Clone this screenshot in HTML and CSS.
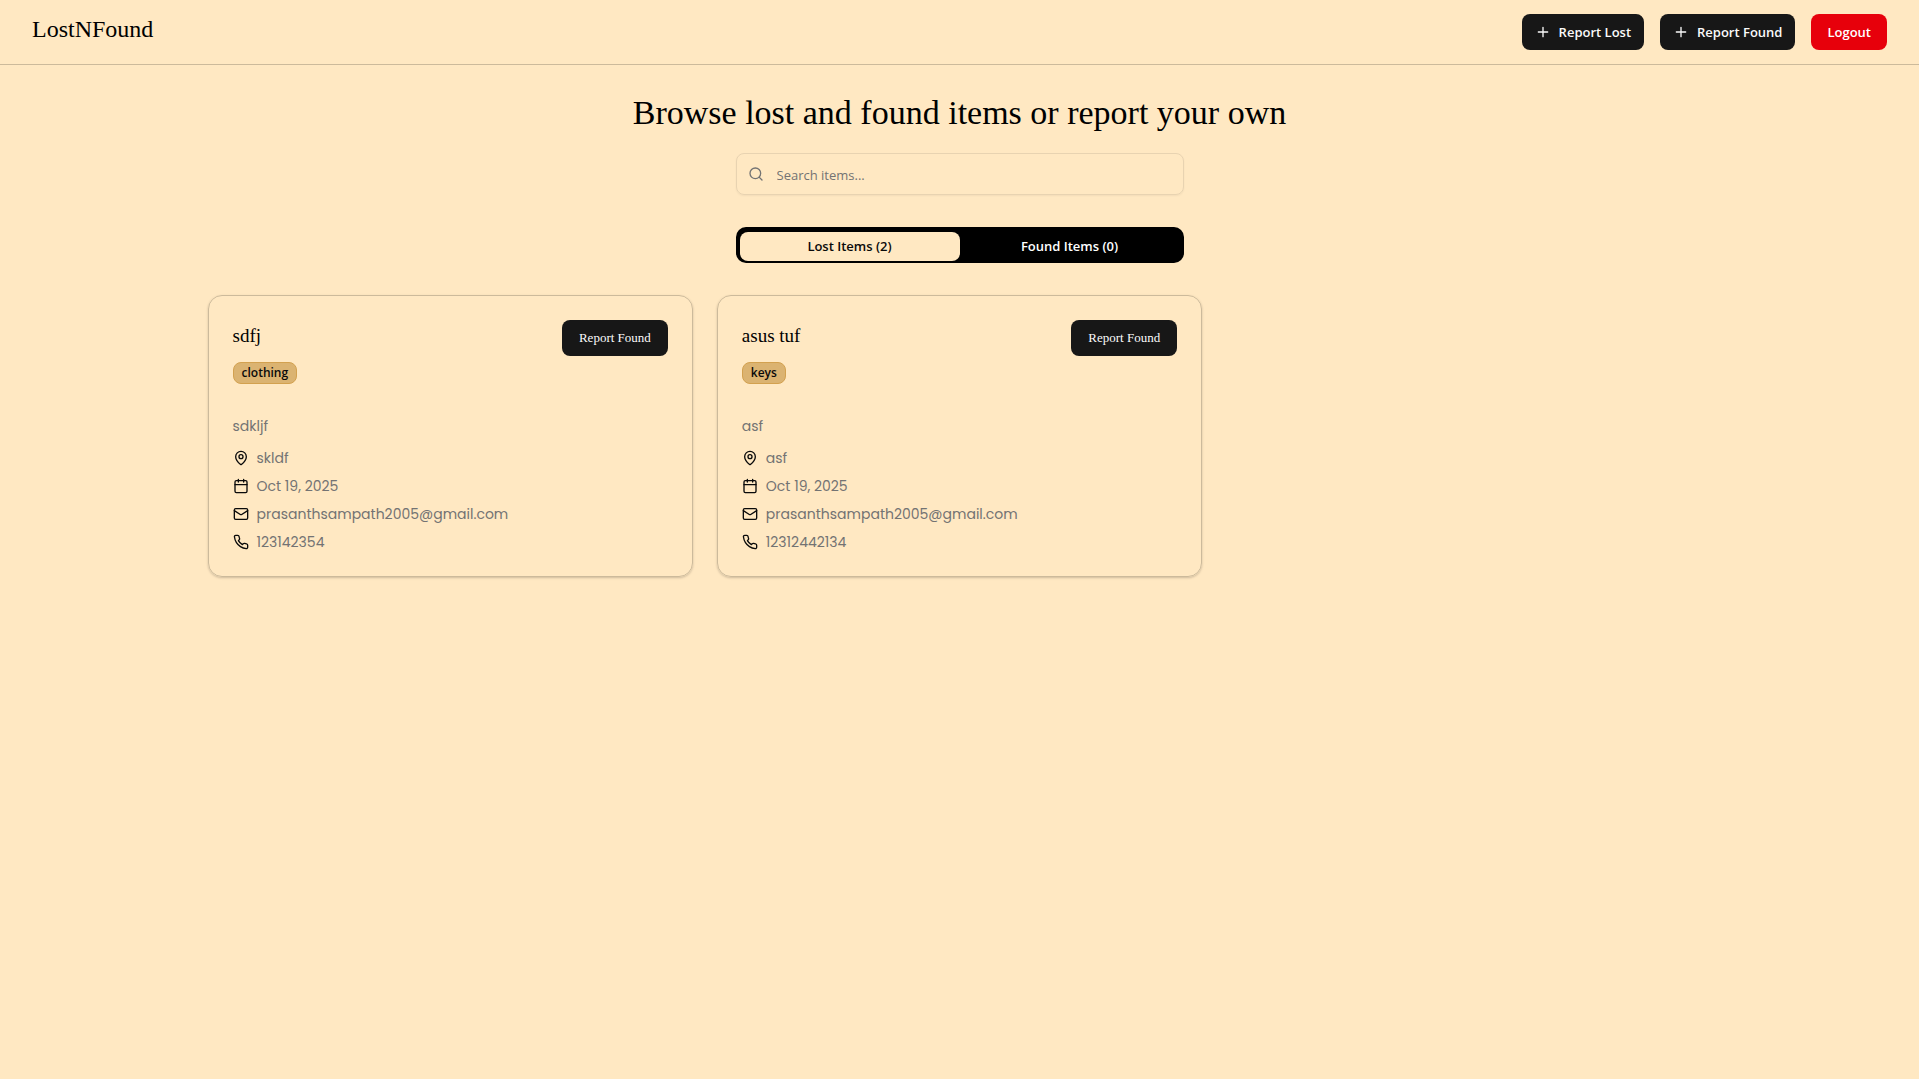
FILE: index.html
```html
<!DOCTYPE html>
<html lang="en">
<head>
  <meta charset="utf-8">
  <meta name="viewport" content="width=device-width, initial-scale=1">
  <title>LostNFound</title>
  <link rel="stylesheet" href="styles.css">
</head>
<body>
  <svg class="sprite" aria-hidden="true">
    <symbol id="plus" viewBox="0 0 24 24"><path d="M5 12h14M12 5v14"/></symbol>
    <symbol id="search" viewBox="0 0 24 24"><circle cx="11" cy="11" r="8"/><path d="m21 21-4.3-4.3"/></symbol>
    <symbol id="pin" viewBox="0 0 24 24"><path d="M20 10c0 4.993-5.539 10.193-7.399 11.799a1 1 0 0 1-1.202 0C9.539 20.193 4 14.993 4 10a8 8 0 0 1 16 0"/><circle cx="12" cy="10" r="3"/></symbol>
    <symbol id="calendar" viewBox="0 0 24 24"><path d="M8 2v4M16 2v4M3 10h18"/><rect x="3" y="4" width="18" height="18" rx="2"/></symbol>
    <symbol id="mail" viewBox="0 0 24 24"><rect x="2" y="4" width="20" height="16" rx="2"/><path d="m22 7-8.97 5.7a1.94 1.94 0 0 1-2.06 0L2 7"/></symbol>
    <symbol id="phone" viewBox="0 0 24 24"><path d="M22 16.92v3a2 2 0 0 1-2.18 2 19.79 19.79 0 0 1-8.63-3.07 19.5 19.5 0 0 1-6-6 19.79 19.79 0 0 1-3.07-8.67A2 2 0 0 1 4.11 2h3a2 2 0 0 1 2 1.72 12.84 12.84 0 0 0 .7 2.81 2 2 0 0 1-.45 2.11L8.09 9.91a16 16 0 0 0 6 6l1.27-1.27a2 2 0 0 1 2.11-.45 12.84 12.84 0 0 0 2.81.7A2 2 0 0 1 22 16.92z"/></symbol>
  </svg>

  <header class="header">
    <a class="brand" href="#">LostNFound</a>
    <nav class="actions">
      <button class="btn btn-icon" type="button"><svg class="icon"><use href="#plus"/></svg>Report Lost</button>
      <button class="btn btn-icon" type="button"><svg class="icon"><use href="#plus"/></svg>Report Found</button>
      <button class="btn btn-danger" type="button">Logout</button>
    </nav>
  </header>

  <main class="main">
    <h1 class="title">Browse lost and found items or report your own</h1>

    <label class="search">
      <svg class="icon"><use href="#search"/></svg>
      <input class="search-input" type="text" placeholder="Search items..." aria-label="Search items">
    </label>

    <div class="tabs" role="tablist">
      <button class="tab tab-active" type="button" role="tab" aria-selected="true">Lost Items (2)</button>
      <button class="tab" type="button" role="tab" aria-selected="false">Found Items (0)</button>
    </div>

    <section class="grid">
      <article class="card">
        <div class="card-head">
          <div class="card-name">
            <h2 class="card-title">sdfj</h2>
            <span class="badge">clothing</span>
          </div>
          <button class="btn btn-serif" type="button">Report Found</button>
        </div>
        <p class="desc">sdkljf</p>
        <ul class="details">
          <li class="detail"><svg class="icon"><use href="#pin"/></svg><span>skldf</span></li>
          <li class="detail"><svg class="icon"><use href="#calendar"/></svg><span>Oct 19, 2025</span></li>
          <li class="detail"><svg class="icon"><use href="#mail"/></svg><span>prasanthsampath2005@gmail.com</span></li>
          <li class="detail"><svg class="icon"><use href="#phone"/></svg><span>123142354</span></li>
        </ul>
      </article>

      <article class="card">
        <div class="card-head">
          <div class="card-name">
            <h2 class="card-title">asus tuf</h2>
            <span class="badge">keys</span>
          </div>
          <button class="btn btn-serif" type="button">Report Found</button>
        </div>
        <p class="desc">asf</p>
        <ul class="details">
          <li class="detail"><svg class="icon"><use href="#pin"/></svg><span>asf</span></li>
          <li class="detail"><svg class="icon"><use href="#calendar"/></svg><span>Oct 19, 2025</span></li>
          <li class="detail"><svg class="icon"><use href="#mail"/></svg><span>prasanthsampath2005@gmail.com</span></li>
          <li class="detail"><svg class="icon"><use href="#phone"/></svg><span>12312442134</span></li>
        </ul>
      </article>
    </section>
  </main>
</body>
</html>
```
FILE: styles.css
```css
:root {
  --bg: #ffe8c2;
  --line: #ccba9b;
  --ink: #0a0a0a;
  --muted: #737373;
  --dark: #171717;
  --serif: "Liberation Serif", serif;
  --ui: "Open Sans", "Noto Sans", sans-serif;
  --body: Poppins, Inter, sans-serif;
}

*,
*::before,
*::after {
  box-sizing: border-box;
}

body {
  margin: 0;
  min-height: 100vh;
  background: var(--bg);
  color: var(--ink);
  font: 13px/20px var(--ui);
}

h1,
h2,
p,
ul {
  margin: 0;
  padding: 0;
  font-weight: 400;
}

.sprite {
  display: none;
}

.icon {
  width: 16px;
  height: 16px;
  flex: none;
  fill: none;
  stroke: currentColor;
  stroke-width: 2;
  stroke-linecap: round;
  stroke-linejoin: round;
}

.header {
  display: flex;
  justify-content: space-between;
  align-items: flex-start;
  padding: 14px 32px;
  border-bottom: 1px solid var(--line);
}

.brand {
  color: #000;
  font: 24px/30px var(--serif);
  text-decoration: none;
}

.actions {
  display: flex;
  gap: 16px;
}

.btn {
  display: inline-flex;
  align-items: center;
  justify-content: center;
  height: 36px;
  padding: 0 16px;
  border: 0;
  border-radius: 8px;
  background: var(--dark);
  color: #fafafa;
  font: 600 13px/20px var(--ui);
  white-space: nowrap;
  cursor: pointer;
}

.btn-icon {
  gap: 8px;
  padding: 0 13px;
}

.btn-danger {
  background: #e7000b;
  color: #fff;
}

.btn-serif {
  padding: 0 17px;
  font: 13px/20px var(--serif);
}

.main {
  max-width: 1536px;
  margin: 0 auto;
  padding: 28px 16px;
}

.title {
  color: #000;
  font: 34px/40px var(--serif);
  text-align: center;
}

.search {
  display: flex;
  align-items: center;
  gap: 13px;
  max-width: 448px;
  height: 42px;
  margin: 20px auto 32px;
  padding: 0 11px;
  border: 1px solid #e8d3b1;
  border-radius: 8px;
  box-shadow: 0 1px 2px rgba(0, 0, 0, 0.05);
  color: var(--muted);
}

.search-input {
  flex: 1;
  min-width: 0;
  padding: 2px 0 0;
  border: 0;
  outline: 0;
  background: none;
  color: var(--ink);
  font: 13px/20px var(--ui);
}

.search-input::placeholder {
  color: var(--muted);
  opacity: 1;
}

.tabs {
  display: grid;
  grid-template-columns: 1fr 1fr;
  max-width: 448px;
  height: 36px;
  margin: 0 auto 32px;
  padding: 5px 4px 2px;
  border-radius: 10px;
  background: #000;
}

.tab {
  padding: 0 0 2px;
  border: 0;
  border-radius: 8px;
  background: none;
  color: #fff;
  font: 600 13px/20px var(--ui);
  cursor: pointer;
}

.tab-active {
  background: var(--bg);
  color: var(--ink);
}

.grid {
  display: grid;
  grid-template-columns: repeat(3, 1fr);
  gap: 24px;
}

.card {
  padding: 24px;
  border: 1px solid var(--line);
  border-radius: 14px;
  box-shadow: 0 1px 3px rgba(0, 0, 0, 0.1), 0 1px 2px rgba(0, 0, 0, 0.1);
}

.card-head {
  display: flex;
  justify-content: space-between;
  align-items: flex-start;
  margin-bottom: 32px;
}

.card-title {
  margin-bottom: 10px;
  color: #000;
  font: 19px/32px var(--serif);
}

.badge {
  display: block;
  width: fit-content;
  padding: 2px 8px;
  border: 1px solid #d3a14f;
  border-radius: 8px;
  background: #dbb371;
  font: 600 12px/16px var(--ui);
}

.desc {
  margin-bottom: 12px;
  color: var(--muted);
  font: 14px/20px var(--body);
}

.details {
  display: grid;
  gap: 8px;
  list-style: none;
}

.detail {
  display: flex;
  align-items: center;
  gap: 8px;
  font: 14px/20px var(--body);
}

.detail span {
  color: var(--muted);
}

@media (max-width: 1000px) {
  .grid {
    grid-template-columns: 1fr;
  }
}
```
